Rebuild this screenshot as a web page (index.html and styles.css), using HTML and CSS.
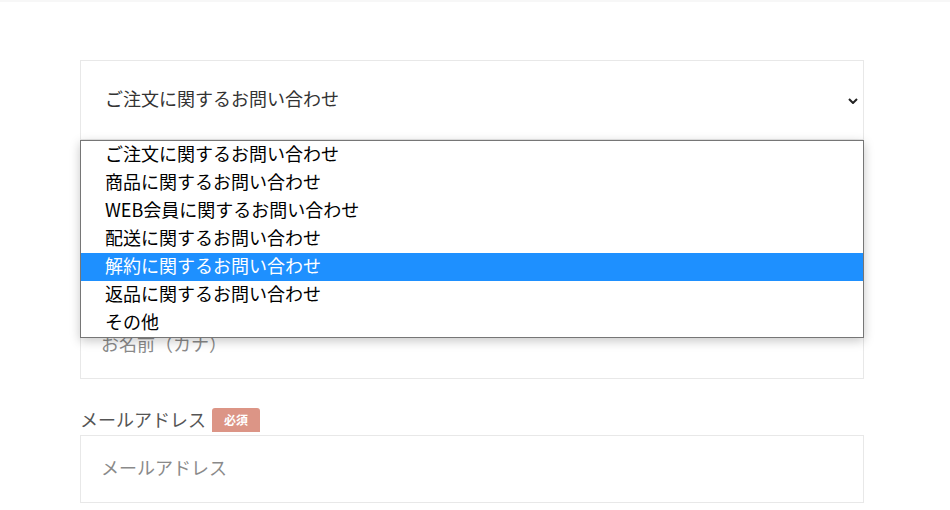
FILE: index.html
```html
<!DOCTYPE html>
<html lang="ja">
<head>
  <meta charset="UTF-8" />
  <meta name="viewport" content="width=device-width, initial-scale=1.0"/>
  <title>お問い合わせ</title>
  <link rel="stylesheet" href="styles.css">
</head>
<body>
  <main class="contact">
    <form class="contact-form">
      <!-- Inquiry type (select, open) -->
      <div class="field field-select">
        <div class="select-box">
          <span class="select-value">ご注文に関するお問い合わせ</span>
          <svg class="select-arrow" width="10" height="6" viewBox="0 0 10 6">
            <path d="M1 1 L5 5 L9 1" fill="none" stroke="#222" stroke-width="2"/>
          </svg>
        </div>
        <ul class="select-menu">
          <li>ご注文に関するお問い合わせ</li>
          <li>商品に関するお問い合わせ</li>
          <li>WEB会員に関するお問い合わせ</li>
          <li>配送に関するお問い合わせ</li>
          <li class="active">解約に関するお問い合わせ</li>
          <li>返品に関するお問い合わせ</li>
          <li>その他</li>
        </ul>
      </div>

      <div class="field">
        <label class="field-label">お名前 <span class="badge">必須</span></label>
        <div class="input-box placeholder">お名前</div>
      </div>

      <div class="field">
        <label class="field-label">お名前（カナ） <span class="badge">必須</span></label>
        <div class="input-box placeholder">お名前（カナ）</div>
      </div>

      <div class="field">
        <label class="field-label">メールアドレス <span class="badge">必須</span></label>
        <div class="input-box placeholder">メールアドレス</div>
      </div>
    </form>
  </main>
</body>
</html>
```

FILE: styles.css
```css
/* Reset and base styles */
* {
  box-sizing: border-box;
  margin: 0;
  padding: 0;
}

body {
  font-family: "Noto Sans CJK JP", "Noto Sans", sans-serif;
  background-color: #ffffff;
  color: #333;
  border-top: 2px solid #f7f7f7;
  overflow: hidden;
  height: 510px;
}

/* Main layout */
.contact {
  padding: 58px 86px 0 80px;
}

.contact-form {
  display: flex;
  flex-direction: column;
  gap: 28px;
}

.field {
  display: flex;
  flex-direction: column;
}

/* Select */
.field-select {
  position: relative;
  margin-bottom: -9px;
}

.select-box {
  height: 80px;
  border: 1px solid #e8e8e8;
  display: flex;
  align-items: center;
  justify-content: space-between;
  padding: 0 5px 4px 24px;
  font-size: 18px;
  color: #333;
}

.select-arrow {
  margin-top: 5px;
}

/* Open dropdown list */
.select-menu {
  position: absolute;
  top: 80px;
  left: 0;
  width: 784px;
  list-style: none;
  background-color: #fff;
  border: 1px solid #767676;
  box-shadow: 0 3px 10px rgba(0, 0, 0, 0.22);
  z-index: 10;
}

.select-menu li {
  height: 28px;
  line-height: 24px;
  padding: 0 0 4px 24px;
  font-size: 18px;
  color: #000;
  white-space: nowrap;
}

.select-menu li.active {
  background-color: #1e90ff;
  color: #fff;
}

/* Labels */
.field-label {
  display: flex;
  align-items: center;
  gap: 6px;
  height: 28px;
  font-size: 18px;
  color: #555;
  line-height: 24px;
  padding-bottom: 4px;
}

.badge {
  display: inline-block;
  width: 48px;
  height: 24px;
  line-height: 24px;
  margin-top: 2px;
  text-align: center;
  background-color: #dc9586;
  color: #fff;
  font-size: 12px;
  font-weight: bold;
  border-radius: 3px 3px 0 0;
}

/* Inputs */
.input-box {
  height: 68px;
  border: 1px solid #e8e8e8;
  display: flex;
  align-items: center;
  padding: 0 20px 4px;
  font-size: 18px;
}

.placeholder {
  color: #8a8a8a;
}
```
